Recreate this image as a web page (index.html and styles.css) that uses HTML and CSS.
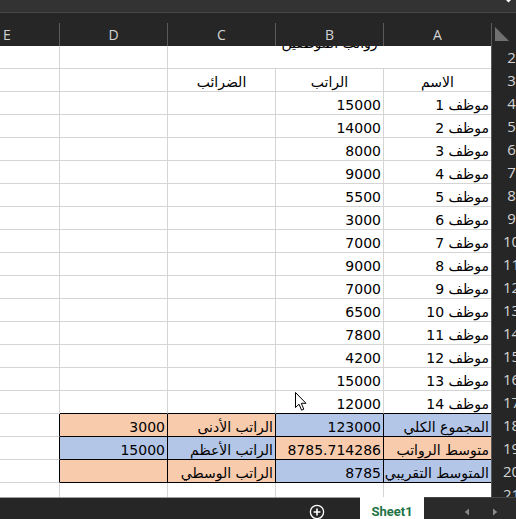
FILE: index.html
```html
<!DOCTYPE html>
<html lang="ar">
<head>
<meta charset="utf-8">
<title>Sheet1</title>
<link rel="stylesheet" href="styles.css">
</head>
<body>
<div class="app">
  <div class="topbar">
    <svg class="tmark" width="6" height="3" viewBox="0 0 6 3"><polygon points="0,0 5,0 2.5,2.5" fill="#ffffff"/></svg>
  </div>
  <div class="hdr">
    <div class="h h-e">E</div>
    <div class="h">D</div>
    <div class="h">C</div>
    <div class="h">B</div>
    <div class="h h-a">A</div>
    <div class="corner"><svg width="24" height="22" viewBox="0 0 24 22"><polygon points="3,5 3,19 17,19" fill="#707070"/></svg></div>
  </div>
  <div class="body">
    <div class="grid">
      <!-- row 2 -->
      <div class="c"></div><div class="c"></div>
      <div class="c title"><span dir="rtl">رواتب الموظفين</span></div>
      <div class="rn"><span>2</span></div>
      <!-- row 3 -->
      <div class="c"></div><div class="c"></div>
      <div class="c ctr"><span dir="rtl">الضرائب</span></div>
      <div class="c ctr"><span dir="rtl">الراتب</span></div>
      <div class="c ca ctr"><span dir="rtl">الاسم</span></div>
      <div class="rn"><span>3</span></div>
      <!-- row 4 -->
      <div class="c"></div><div class="c"></div><div class="c"></div>
      <div class="c r">15000</div><div class="c ca r"><span dir="rtl">موظف 1</span></div>
      <div class="rn"><span>4</span></div>
      <!-- row 5 -->
      <div class="c"></div><div class="c"></div><div class="c"></div>
      <div class="c r">14000</div><div class="c ca r"><span dir="rtl">موظف 2</span></div>
      <div class="rn"><span>5</span></div>
      <!-- row 6 -->
      <div class="c"></div><div class="c"></div><div class="c"></div>
      <div class="c r">8000</div><div class="c ca r"><span dir="rtl">موظف 3</span></div>
      <div class="rn"><span>6</span></div>
      <!-- row 7 -->
      <div class="c"></div><div class="c"></div><div class="c"></div>
      <div class="c r">9000</div><div class="c ca r"><span dir="rtl">موظف 4</span></div>
      <div class="rn"><span>7</span></div>
      <!-- row 8 -->
      <div class="c"></div><div class="c"></div><div class="c"></div>
      <div class="c r">5500</div><div class="c ca r"><span dir="rtl">موظف 5</span></div>
      <div class="rn"><span>8</span></div>
      <!-- row 9 -->
      <div class="c"></div><div class="c"></div><div class="c"></div>
      <div class="c r">3000</div><div class="c ca r"><span dir="rtl">موظف 6</span></div>
      <div class="rn"><span>9</span></div>
      <!-- row 10 -->
      <div class="c"></div><div class="c"></div><div class="c"></div>
      <div class="c r">7000</div><div class="c ca r"><span dir="rtl">موظف 7</span></div>
      <div class="rn"><span>10</span></div>
      <!-- row 11 -->
      <div class="c"></div><div class="c"></div><div class="c"></div>
      <div class="c r">9000</div><div class="c ca r"><span dir="rtl">موظف 8</span></div>
      <div class="rn"><span>11</span></div>
      <!-- row 12 -->
      <div class="c"></div><div class="c"></div><div class="c"></div>
      <div class="c r">7000</div><div class="c ca r"><span dir="rtl">موظف 9</span></div>
      <div class="rn"><span>12</span></div>
      <!-- row 13 -->
      <div class="c"></div><div class="c"></div><div class="c"></div>
      <div class="c r">6500</div><div class="c ca r"><span dir="rtl">موظف 10</span></div>
      <div class="rn"><span>13</span></div>
      <!-- row 14 -->
      <div class="c"></div><div class="c"></div><div class="c"></div>
      <div class="c r">7800</div><div class="c ca r"><span dir="rtl">موظف 11</span></div>
      <div class="rn"><span>14</span></div>
      <!-- row 15 -->
      <div class="c"></div><div class="c"></div><div class="c"></div>
      <div class="c r">4200</div><div class="c ca r"><span dir="rtl">موظف 12</span></div>
      <div class="rn"><span>15</span></div>
      <!-- row 16 -->
      <div class="c"></div><div class="c"></div><div class="c"></div>
      <div class="c r">15000</div><div class="c ca r"><span dir="rtl">موظف 13</span></div>
      <div class="rn"><span>16</span></div>
      <!-- row 17 -->
      <div class="c"></div><div class="c bb"></div><div class="c bb"></div>
      <div class="c bb r">12000</div><div class="c ca bb r"><span dir="rtl">موظف 14</span></div>
      <div class="rn"><span>17</span></div>
      <!-- row 18 -->
      <div class="c br"></div>
      <div class="c k or r">3000</div>
      <div class="c k or r"><span dir="rtl">الراتب الأدنى</span></div>
      <div class="c k bl r">123000</div>
      <div class="c ca k bl r"><span dir="rtl">المجموع الكلي</span></div>
      <div class="rn"><span>18</span></div>
      <!-- row 19 -->
      <div class="c br"></div>
      <div class="c k bl r">15000</div>
      <div class="c k bl r"><span dir="rtl">الراتب الأعظم</span></div>
      <div class="c k or r">8785.714286</div>
      <div class="c ca k or r"><span dir="rtl">متوسط الرواتب</span></div>
      <div class="rn"><span>19</span></div>
      <!-- row 20 -->
      <div class="c br"></div>
      <div class="c k or r"></div>
      <div class="c k or r"><span dir="rtl">الراتب الوسطي</span></div>
      <div class="c k bl r">8785</div>
      <div class="c ca k bl r"><span dir="rtl">المتوسط التقريبي</span></div>
      <div class="rn"><span>20</span></div>
      <!-- row 21 -->
      <div class="c"></div><div class="c"></div><div class="c"></div><div class="c"></div><div class="c ca"></div>
      <div class="rn"><span>21</span></div>
    </div>
    <svg class="cursor" width="13" height="20" viewBox="0 0 13 20"><path d="M0.5 0.5 L0.5 15.5 L4 12.2 L6.6 18.2 L8.8 17.2 L6.3 11.3 L11 11.3 Z" fill="#ffffff" stroke="#000000" stroke-width="1" stroke-linejoin="round"/></svg>
  </div>
  <div class="tabbar">
    <div class="tb-left">
      <svg class="addsheet" width="16" height="16" viewBox="0 0 16 16"><circle cx="8" cy="8" r="6.6" fill="none" stroke="#ffffff" stroke-width="1.3"/><path d="M8 4.6 V11.4 M4.6 8 H11.4" stroke="#ffffff" stroke-width="1.6"/></svg>
    </div>
    <div class="tb-tab">Sheet1</div>
    <div class="tb-right">
      <svg class="arr" width="6" height="8" viewBox="0 0 6 8"><polygon points="5,0.5 5,7.5 0.8,4" fill="#8a8a8a"/></svg>
      <svg class="arr" width="6" height="8" viewBox="0 0 6 8"><polygon points="1,0.5 1,7.5 5.2,4" fill="#8a8a8a"/></svg>
    </div>
  </div>
</div>
</body>
</html>
```

FILE: styles.css
```css
* { box-sizing: border-box; }
html, body { margin: 0; padding: 0; }
body {
  width: 516px;
  height: 519px;
  overflow: hidden;
  background: #ffffff;
  font-family: "DejaVu Sans", "Noto Sans", sans-serif;
}
.app {
  width: 516px;
  height: 519px;
  display: flex;
  flex-direction: column;
  overflow: hidden;
}
.topbar {
  height: 13px;
  flex: none;
  background: #333333;
  border-bottom: 1px solid #474747;
  display: flex;
  justify-content: flex-end;
  align-items: flex-start;
}
.tmark { margin-right: 4px; display: block; }

.hdr {
  height: 33px;
  flex: none;
  background: #262626;
  padding-top: 10px;
  display: grid;
  grid-template-columns: 60px 108px 108px 108px 107px 25px;
}
.h {
  border-right: 1px solid #5a5a5a;
  display: flex;
  align-items: center;
  justify-content: center;
  color: #d4d4d4;
  font-family: "Open Sans", "Noto Sans", sans-serif;
  font-size: 14px;
  padding-bottom: 1px;
}
.h-e { justify-content: flex-start; padding-left: 3px; }
.h-a { border-right: none; }
.corner {
  border-left: 1px solid #5a5a5a;
}
.corner svg { display: block; margin-top: -1px; }

.body {
  flex: 1;
  position: relative;
  overflow: hidden;
}
.grid {
  display: grid;
  grid-template-columns: 60px 108px 108px 108px 107px 25px;
  grid-auto-rows: 23px;
}
.c {
  border-right: 1px solid #d4d4d4;
  border-bottom: 1px solid #d4d4d4;
  display: flex;
  align-items: flex-end;
  padding: 0 2px 1px;
  font-size: 14px;
  line-height: 16px;
  color: #000000;
  white-space: nowrap;
}
.ca { border-right: none; }
.r { justify-content: flex-end; }
.ctr { justify-content: center; }
.title {
  grid-column: span 3;
  border-right: none;
  justify-content: center;
  align-items: flex-start;
  font-size: 14px;
}
.title span { margin-top: -11px; }
.bb { border-bottom-color: #000000; }
.br { border-right-color: #000000; }
.k { border-right-color: #000000; border-bottom-color: #000000; }
.or { background: #f8cbad; }
.bl { background: #b4c6e7; }

.rn {
  display: block;
  background: #262626;
  border-left: 1px solid #5a5a5a;
  overflow: hidden;
  color: #d4d4d4;
  font-family: "Open Sans", "Noto Sans", sans-serif;
  font-size: 15px;
}
.rn span {
  display: block;
  width: 37px;
  margin-left: 1px;
  text-align: center;
  line-height: 22px;
}

.cursor {
  position: absolute;
  left: 295px;
  top: 346px;
}

.tabbar {
  height: 22px;
  flex: none;
  display: flex;
}
.tb-left {
  width: 360px;
  background: #262626;
  border-top: 1px solid #9f9f9f;
  display: flex;
  justify-content: flex-end;
  align-items: flex-start;
  padding-top: 6px;
}
.addsheet { display: block; margin-right: 35px; }
.tb-tab {
  width: 64px;
  background: #ffffff;
  color: #217346;
  font-family: Roboto, "Liberation Sans", sans-serif;
  font-weight: 700;
  font-size: 13px;
  text-align: center;
  padding-top: 8px;
  line-height: 14px;
}
.tb-right {
  flex: 1;
  background: #2a2a2a;
  border-top: 1px solid #454545;
  display: flex;
  align-items: flex-start;
  padding-top: 10px;
  padding-left: 40px;
  gap: 22px;
}
.arr { display: block; }
```
